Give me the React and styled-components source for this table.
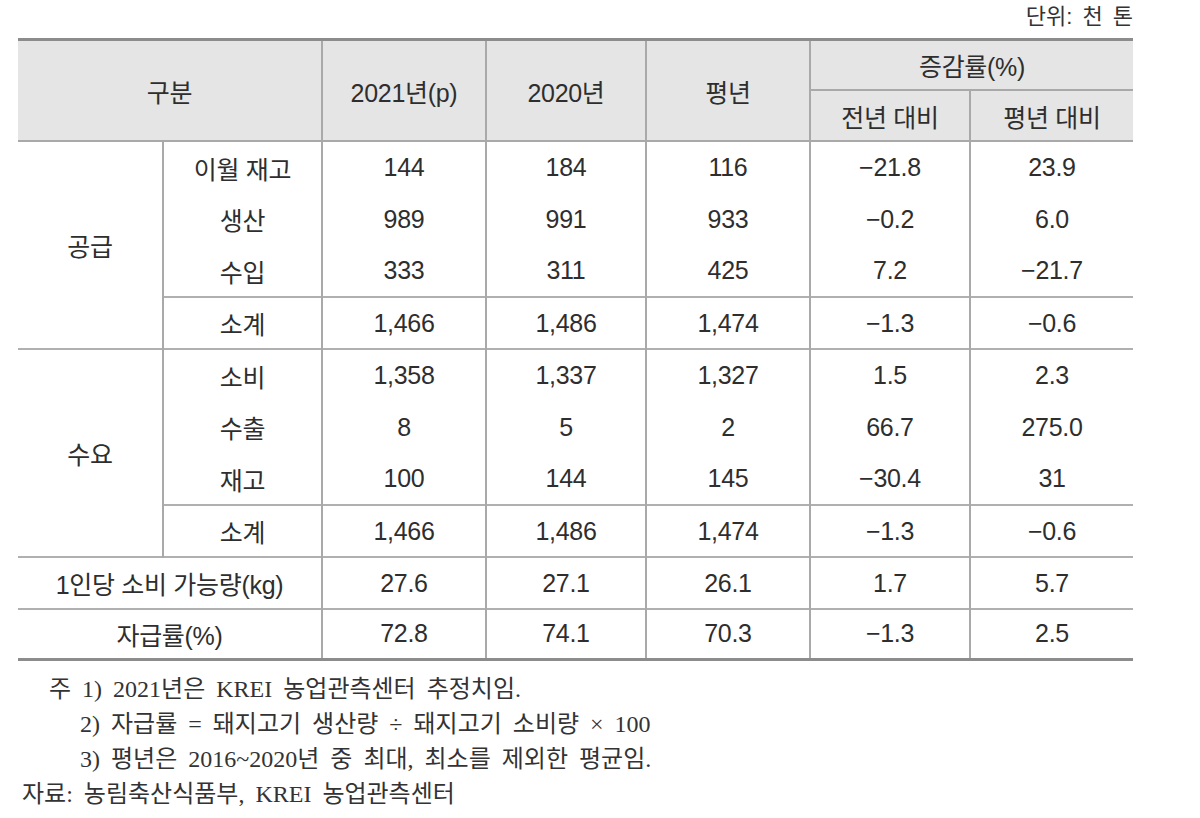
import React from "react";
import styled, { createGlobalStyle } from "styled-components";

const Global = createGlobalStyle`
  html, body { margin: 0; padding: 0; background: #ffffff; }
  body { font-family: "Liberation Sans", "Noto Sans CJK KR", sans-serif; color: #333; }
`;

const Page = styled.div`
  width: 1200px;
  height: 818px;
  box-sizing: border-box;
  padding: 4px 67px 0 18px;
  background: #fff;
`;

const Unit = styled.div`
  text-align: right;
  font-family: "Liberation Sans", "Noto Sans CJK KR", sans-serif;
  font-size: 22px;
  line-height: 26px;
  word-spacing: 4px;
  color: #333;
  margin-bottom: 8px;
`;

const Table = styled.table`
  width: 1115px;
  border-collapse: collapse;
  table-layout: fixed;
  border-top: 3px solid #8c8c8c;
  border-bottom: 3px solid #8c8c8c;
  font-family: "Liberation Sans", "Noto Sans CJK KR", sans-serif;
  font-size: 25px;
  letter-spacing: -0.3px;
  color: #2e2e2e;
`;

const Th = styled.th`
  background: #e5e5e5;
  font-weight: normal;
  text-align: center;
  vertical-align: middle;
  padding: 0;
  height: ${(p) => p.$h || 48}px;
  border-left: ${(p) => (p.$first ? "none" : "2px solid #a9a9a9")};
  border-bottom: 2px solid #a9a9a9;
`;

const HeadRow = styled.tr``;

const Row = styled.tr`
  height: ${(p) => p.$h || 52}px;
`;

const Td = styled.td`
  text-align: center;
  vertical-align: middle;
  padding: 0;
  border-left: ${(p) => (p.$first ? "none" : "2px solid #a9a9a9")};
  border-top: ${(p) => (p.$line ? "2px solid #b0b0b0" : "none")};
`;

const Notes = styled.div`
  margin-top: 11px;
  font-family: "Liberation Serif", "Noto Sans CJK KR", serif;
  font-size: 24px;
  line-height: 35px;
  word-spacing: 5px;
  color: #333;
`;

const Note = styled.div`
  padding-left: ${(p) => p.$indent || 0}px;
  white-space: nowrap;
`;

const groups = [
  {
    label: "공급",
    rows: [
      ["이월 재고", "144", "184", "116", "−21.8", "23.9"],
      ["생산", "989", "991", "933", "−0.2", "6.0"],
      ["수입", "333", "311", "425", "7.2", "−21.7"],
    ],
    total: ["소계", "1,466", "1,486", "1,474", "−1.3", "−0.6"],
  },
  {
    label: "수요",
    rows: [
      ["소비", "1,358", "1,337", "1,327", "1.5", "2.3"],
      ["수출", "8", "5", "2", "66.7", "275.0"],
      ["재고", "100", "144", "145", "−30.4", "31"],
    ],
    total: ["소계", "1,466", "1,486", "1,474", "−1.3", "−0.6"],
  },
];

const singles = [
  ["1인당 소비 가능량(kg)", "27.6", "27.1", "26.1", "1.7", "5.7"],
  ["자급률(%)", "72.8", "74.1", "70.3", "−1.3", "2.5"],
];

const widths = [145, 159, 164, 160, 164, 160, 163];

export default function App() {
  return (
    <>
      <Global />
      <Page>
        <Unit>단위: 천 톤</Unit>
        <Table>
          <colgroup>
            {widths.map((w, i) => (
              <col key={i} style={{ width: w }} />
            ))}
          </colgroup>
          <thead>
            <HeadRow>
              <Th $first colSpan={2} rowSpan={2}>구분</Th>
              <Th rowSpan={2}>2021년(p)</Th>
              <Th rowSpan={2}>2020년</Th>
              <Th rowSpan={2}>평년</Th>
              <Th colSpan={2}>증감률(%)</Th>
            </HeadRow>
            <HeadRow>
              <Th $h={49}>전년 대비</Th>
              <Th $h={49}>평년 대비</Th>
            </HeadRow>
          </thead>
          <tbody>
            {groups.map((g, gi) => (
              <React.Fragment key={gi}>
                {g.rows.map((r, ri) => (
                  <Row key={ri}>
                    {ri === 0 && (
                      <Td $first $line={gi > 0} rowSpan={4}>
                        {g.label}
                      </Td>
                    )}
                    {r.map((c, ci) => (
                      <Td key={ci} $line={ri === 0 && gi > 0}>
                        {c}
                      </Td>
                    ))}
                  </Row>
                ))}
                <Row>
                  {g.total.map((c, ci) => (
                    <Td key={ci} $line>
                      {c}
                    </Td>
                  ))}
                </Row>
              </React.Fragment>
            ))}
            {singles.map((r, ri) => (
              <Row key={ri} $h={ri === 1 ? 50 : 52}>
                <Td $first $line colSpan={2}>
                  {r[0]}
                </Td>
                {r.slice(1).map((c, ci) => (
                  <Td key={ci} $line>
                    {c}
                  </Td>
                ))}
              </Row>
            ))}
          </tbody>
        </Table>
        <Notes>
          <Note $indent={31}>주 1) 2021년은 KREI 농업관측센터 추정치임.</Note>
          <Note $indent={62}>2) 자급률 = 돼지고기 생산량 ÷ 돼지고기 소비량 × 100</Note>
          <Note $indent={62}>3) 평년은 2016~2020년 중 최대, 최소를 제외한 평균임.</Note>
          <Note $indent={4}>자료: 농림축산식품부, KREI 농업관측센터</Note>
        </Notes>
      </Page>
    </>
  );
}
